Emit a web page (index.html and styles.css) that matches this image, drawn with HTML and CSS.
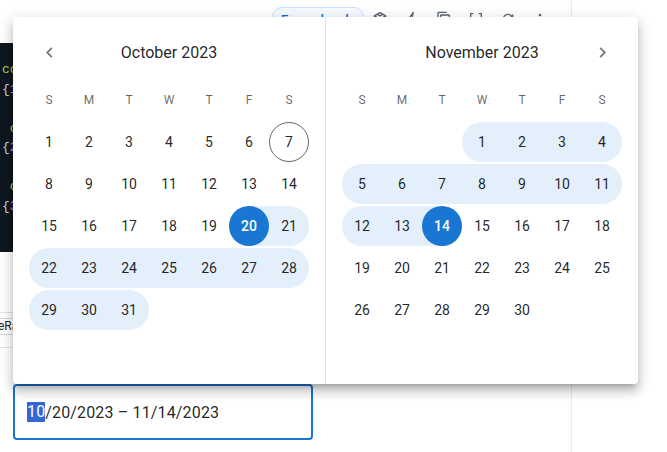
FILE: index.html
```html
<!DOCTYPE html>
<html lang="en">
<head>
<meta charset="utf-8">
<title>Date range picker</title>
<link rel="stylesheet" href="styles.css">
</head>
<body>
<div class="page">
  <div class="main">
    <div class="toolbar">
      <span class="expand">Expand code</span>
      <span class="tool"><svg viewBox="0 0 24 24" width="16" height="16"><path d="M12 2.5 3.5 7.2v9.6L12 21.5l8.5-4.7V7.2z M3.5 7.2 12 12l8.5-4.8 M12 12v9.5 M7.7 4.8 12 7.3l4.3-2.5" fill="none" stroke="currentColor" stroke-width="2" stroke-linejoin="round"/></svg></span>
      <span class="tool"><svg viewBox="0 0 24 24" width="16" height="16"><path d="M14 2 6 13h5l-2 9 8-12h-5z" fill="none" stroke="currentColor" stroke-width="2" stroke-linejoin="round"/></svg></span>
      <span class="tool"><svg viewBox="0 0 24 24" width="16" height="16"><path fill="currentColor" d="M16 1H4c-1.1 0-2 .9-2 2v14h2V3h12V1zm3 4H8c-1.1 0-2 .9-2 2v14c0 1.1.9 2 2 2h11c1.1 0 2-.9 2-2V7c0-1.1-.9-2-2-2zm0 16H8V7h11v14z"/></svg></span>
      <span class="tool"><svg viewBox="0 0 24 24" width="16" height="16"><path d="M8 4H4v16h4 M16 4h4v16h-4 M9 12h6" fill="none" stroke="currentColor" stroke-width="2"/></svg></span>
      <span class="tool"><svg viewBox="0 0 24 24" width="16" height="16"><path fill="currentColor" d="M17.65 6.35C16.2 4.9 14.21 4 12 4c-4.42 0-7.990 3.58-7.99 8s3.57 8 7.99 8c3.73 0 6.84-2.55 7.73-6h-2.08c-.82 2.330-3.04 4-5.65 4-3.31 0-6-2.69-6-6s2.69-6 6-6c1.66 0 3.14.69 4.22 1.78L13 11h7V4l-2.35 2.35z"/></svg></span>
      <span class="tool"><svg viewBox="0 0 24 24" width="16" height="16"><path fill="currentColor" d="M12 8c1.1 0 2-.9 2-2s-.9-2-2-2-2 .9-2 2 .9 2 2 2zm0 2c-1.1 0-2 .9-2 2s.9 2 2 2 2-.9 2-2-.9-2-2-2zm0 6c-1.1 0-2 .9-2 2s.9 2 2 2 2-.9 2-2-.9-2-2-2z"/></svg></span>
    </div>
<pre class="code"><span class="g">co</span>
<span class="p">{</span><span class="v">1</span>
 
 <span class="g">c</span>
<span class="p">{</span><span class="v">2</span>
 
 <span class="g">c</span>
<span class="p">{</span><span class="v">3</span></pre>
    <div class="controls">
      <div class="rule"></div>
      <div class="chip">eRa</div>
      <div class="rule low"></div>
    </div>
    <div class="field"><span class="selected">10</span>/20/2023 – 11/14/2023</div>
  </div>
  <div class="side"></div>
</div>

<div class="popup">
  <div class="panel">
    <div class="head">
      <span class="nav"><svg viewBox="0 0 24 24" width="21" height="21"><path fill="currentColor" d="M15.41 7.41 14 6l-6 6 6 6 1.41-1.41L10.83 12z"/></svg></span>
      <span class="title">October 2023</span>
    </div>
    <div class="wk"><span>S</span><span>M</span><span>T</span><span>W</span><span>T</span><span>F</span><span>S</span></div>
    <div class="weeks">
      <div class="row">
        <div class="c"><span class="d">1</span></div><div class="c"><span class="d">2</span></div><div class="c"><span class="d">3</span></div><div class="c"><span class="d">4</span></div><div class="c"><span class="d">5</span></div><div class="c"><span class="d">6</span></div><div class="c"><span class="d today">7</span></div>
      </div>
      <div class="row">
        <div class="c"><span class="d">8</span></div><div class="c"><span class="d">9</span></div><div class="c"><span class="d">10</span></div><div class="c"><span class="d">11</span></div><div class="c"><span class="d">12</span></div><div class="c"><span class="d">13</span></div><div class="c"><span class="d">14</span></div>
      </div>
      <div class="row">
        <div class="c"><span class="d">15</span></div><div class="c"><span class="d">16</span></div><div class="c"><span class="d">17</span></div><div class="c"><span class="d">18</span></div><div class="c"><span class="d">19</span></div><div class="c r rl"><span class="d pick">20</span></div><div class="c r rr"><span class="d">21</span></div>
      </div>
      <div class="row">
        <div class="c r rl"><span class="d">22</span></div><div class="c r"><span class="d">23</span></div><div class="c r"><span class="d">24</span></div><div class="c r"><span class="d">25</span></div><div class="c r"><span class="d">26</span></div><div class="c r"><span class="d">27</span></div><div class="c r rr"><span class="d">28</span></div>
      </div>
      <div class="row">
        <div class="c r rl"><span class="d">29</span></div><div class="c r"><span class="d">30</span></div><div class="c r rr"><span class="d">31</span></div><div class="c"></div><div class="c"></div><div class="c"></div><div class="c"></div>
      </div>
    </div>
  </div>
  <div class="panel">
    <div class="head">
      <span class="title">November 2023</span>
      <span class="nav"><svg viewBox="0 0 24 24" width="21" height="21"><path fill="currentColor" d="M10 6 8.59 7.41 13.17 12l-4.58 4.59L10 18l6-6z"/></svg></span>
    </div>
    <div class="wk"><span>S</span><span>M</span><span>T</span><span>W</span><span>T</span><span>F</span><span>S</span></div>
    <div class="weeks">
      <div class="row">
        <div class="c"></div><div class="c"></div><div class="c"></div><div class="c r rl"><span class="d">1</span></div><div class="c r"><span class="d">2</span></div><div class="c r"><span class="d">3</span></div><div class="c r rr"><span class="d">4</span></div>
      </div>
      <div class="row">
        <div class="c r rl"><span class="d">5</span></div><div class="c r"><span class="d">6</span></div><div class="c r"><span class="d">7</span></div><div class="c r"><span class="d">8</span></div><div class="c r"><span class="d">9</span></div><div class="c r"><span class="d">10</span></div><div class="c r rr"><span class="d">11</span></div>
      </div>
      <div class="row">
        <div class="c r rl"><span class="d">12</span></div><div class="c r"><span class="d">13</span></div><div class="c r rr"><span class="d pick">14</span></div><div class="c"><span class="d">15</span></div><div class="c"><span class="d">16</span></div><div class="c"><span class="d">17</span></div><div class="c"><span class="d">18</span></div>
      </div>
      <div class="row">
        <div class="c"><span class="d">19</span></div><div class="c"><span class="d">20</span></div><div class="c"><span class="d">21</span></div><div class="c"><span class="d">22</span></div><div class="c"><span class="d">23</span></div><div class="c"><span class="d">24</span></div><div class="c"><span class="d">25</span></div>
      </div>
      <div class="row">
        <div class="c"><span class="d">26</span></div><div class="c"><span class="d">27</span></div><div class="c"><span class="d">28</span></div><div class="c"><span class="d">29</span></div><div class="c"><span class="d">30</span></div><div class="c"></div><div class="c"></div>
      </div>
    </div>
  </div>
</div>
</body>
</html>
```
FILE: styles.css
```css
* { box-sizing: border-box; }
html, body { margin: 0; padding: 0; }
body {
  width: 667px;
  height: 452px;
  overflow: hidden;
  position: relative;
  background: #fff;
  font-family: Roboto, "Liberation Sans", sans-serif;
  color: rgba(0, 0, 0, 0.87);
}
.page { display: flex; height: 452px; }
.main {
  width: 572px;
  border-right: 1px solid #e6e8f2;
  display: flex;
  flex-direction: column;
}
.side { flex: 1; }

.toolbar {
  height: 43px;
  display: flex;
  align-items: flex-start;
  padding: 7px 0 0 272px;
}
.expand {
  height: 26px;
  padding: 0 8px;
  border: 1px solid #c2e0ff;
  border-radius: 10px;
  background: #f6faff;
  color: #0072e5;
  font-size: 13px;
  font-weight: 500;
  line-height: 24px;
  white-space: nowrap;
}
.tool {
  width: 32px;
  height: 16px;
  margin-top: 4px;
  display: flex;
  justify-content: center;
  color: #5a636e;
}
.tool svg { display: block; }

.code {
  height: 209px;
  margin: 0;
  background: #0f1720;
  padding: 17px 0 0 2px;
  font: 13px/19.5px "Liberation Mono", monospace;
  color: #c9d1d9;
  overflow: hidden;
  white-space: pre;
}
.code .g { color: #a9d34c; }
.code .p { color: #d0d4da; }
.code .v { color: #a98bfa; }

.controls {
  height: 132px;
  display: flex;
  flex-direction: column;
  padding-top: 60px;
}
.rule { height: 1px; background: #e3e3e3; }
.rule.low { margin-top: 12px; }
.chip {
  margin-top: 5px;
  margin-left: -2px;
  width: 40px;
  height: 17px;
  border: 1px solid #d5d5d5;
  border-left: none;
  font-size: 12px;
  line-height: 15px;
  color: #222;
}

.field {
  margin-left: 13px;
  width: 300px;
  height: 56px;
  border: 2px solid #1976d2;
  border-radius: 4px;
  padding-left: 12px;
  display: flex;
  align-items: center;
  font-size: 16px;
  letter-spacing: 0.15px;
  color: rgba(0, 0, 0, 0.87);
  white-space: pre;
}
.selected {
  background: #3367d6;
  color: #fff;
  display: inline-block;
  line-height: 20px;
}

.popup {
  position: absolute;
  top: 17px;
  left: 13px;
  width: 625px;
  height: 367px;
  background: #fff;
  border-radius: 4px;
  box-shadow: 0 5px 5px -3px rgba(0, 0, 0, 0.2), 0 8px 10px 1px rgba(0, 0, 0, 0.14), 0 3px 14px 2px rgba(0, 0, 0, 0.12);
  display: flex;
}
.panel { width: 312px; padding: 15px 16px 0; }
.panel + .panel { width: 313px; border-left: 1px solid rgba(0, 0, 0, 0.12); }
.head {
  display: grid;
  grid-template-columns: 40px 1fr 40px;
  height: 40px;
  align-items: center;
}
.title { grid-column: 2; grid-row: 1; text-align: center; font-size: 16px; }
.nav {
  grid-row: 1;
  display: flex;
  justify-content: center;
  align-items: center;
  color: rgba(0, 0, 0, 0.54);
}
.head .title + .nav { grid-column: 3; }
.nav svg { display: block; }

.wk {
  margin-top: 8px;
  height: 40px;
  display: grid;
  grid-template-columns: repeat(7, 40px);
  align-items: center;
  justify-items: center;
  font-size: 12px;
  color: rgba(0, 0, 0, 0.6);
}
.weeks { margin-top: 2px; display: flex; flex-direction: column; gap: 2px; }
.row { display: grid; grid-template-columns: repeat(7, 40px); height: 40px; }
.c { width: 40px; height: 40px; }
.r { background: #e3effa; }
.rl { border-top-left-radius: 20px; border-bottom-left-radius: 20px; }
.rr { border-top-right-radius: 20px; border-bottom-right-radius: 20px; }
.d {
  width: 40px;
  height: 40px;
  border-radius: 50%;
  display: flex;
  align-items: center;
  justify-content: center;
  font-size: 14px;
}
.d.pick { background: #1976d2; color: #fff; font-weight: 500; }
.d.today { border: 1px solid rgba(0, 0, 0, 0.6); }
```
